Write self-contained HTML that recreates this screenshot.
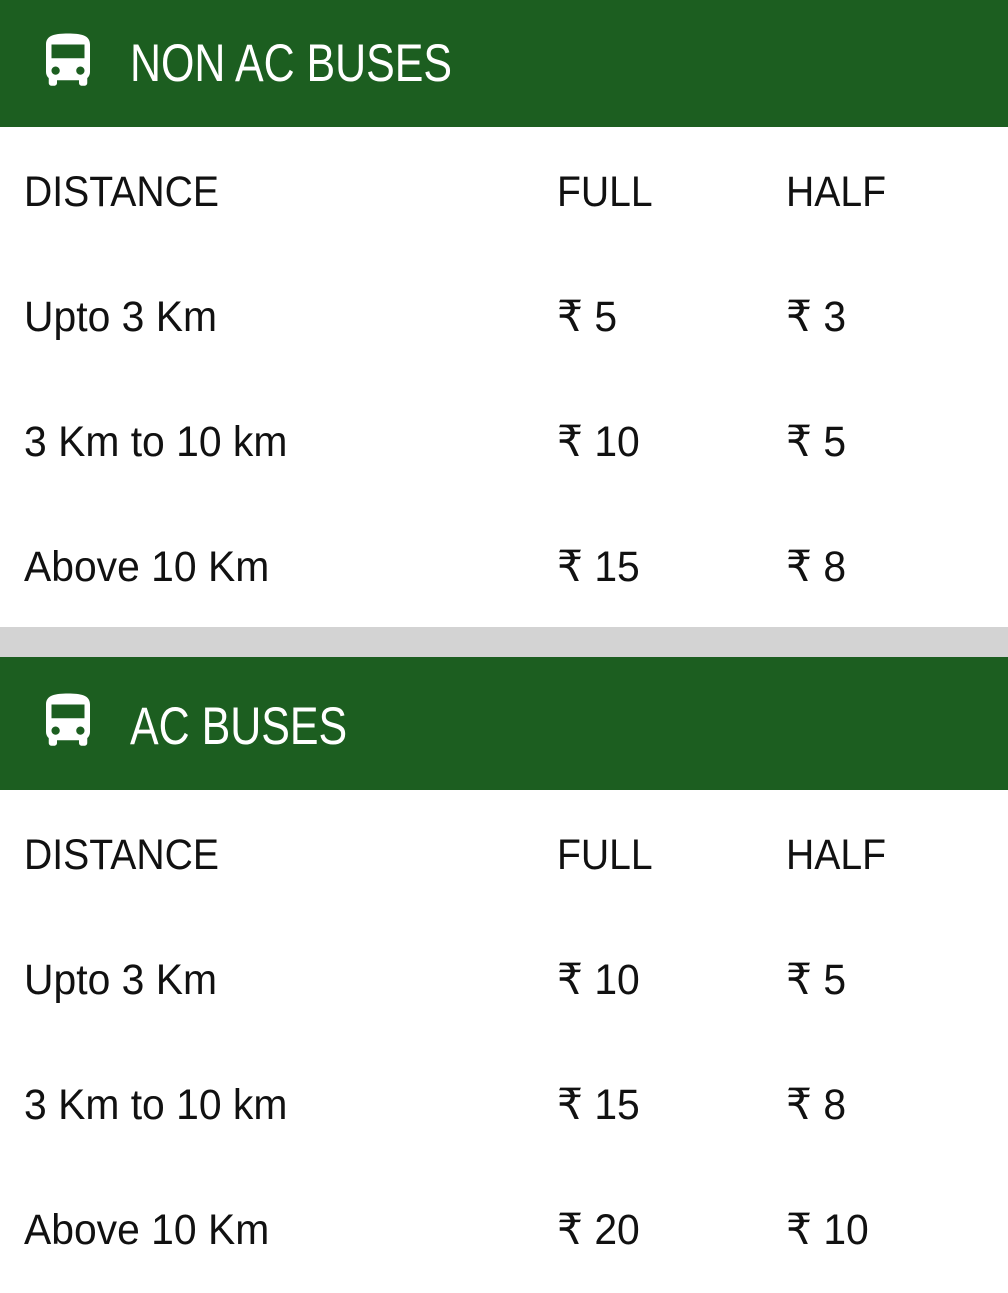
<!DOCTYPE html>
<html><head><meta charset="utf-8"><style>
body{margin:0;width:1008px;height:1281px;background:#fff;font-family:"Liberation Sans",sans-serif;position:relative;overflow:hidden}
.hdr{position:absolute;left:0;width:1008px;height:127px;background:#1c5e20;color:#fff}
.hdr svg{position:absolute;left:35px;top:28px}
.hdr .t{position:absolute;left:130px;top:0;line-height:127px;font-size:53px;transform:scaleX(0.81);transform-origin:left center;white-space:nowrap}
.row{position:absolute;left:0;width:1008px;height:125px;line-height:125px;font-size:43px;color:#111}
.row span{position:absolute;top:0;white-space:nowrap;transform:scaleX(0.95);transform-origin:left center}
.row span.h{transform:scaleX(0.91)}
.c1{left:24px}.c2{left:557px}.c3{left:786px}
.sep{position:absolute;left:0;top:627px;width:1008px;height:30px;background:#d3d3d3}
</style></head><body>
<div class="hdr" style="top:0">
<svg width="66" height="66" viewBox="0 0 24 24"><path fill="#fff" d="M4 16c0 .88.39 1.670 1 2.22V20c0 .55.45 1 1 1h1c.55 0 1-.45 1-1v-1h8v1c0 .55.45 1 1 1h1c.55 0 1-.45 1-1v-1.78c.61-.55 1-1.34 1-2.22V6c0-3.5-3.58-4-8-4s-8 .5-8 4v10zm3.5 1c-.83 0-1.5-.67-1.5-1.5S6.670 14 7.5 14s1.5.67 1.5 1.5S8.33 17 7.5 17zm9 0c-.83 0-1.5-.67-1.5-1.5s.67-1.5 1.5-1.5 1.5.67 1.5 1.5-.67 1.5-1.5 1.5zm1.5-6H6V6h12v5z"/></svg>
<div class="t">NON AC BUSES</div></div>
<div class="row" style="top:130px"><span class="c1 h">DISTANCE</span><span class="c2 h">FULL</span><span class="c3 h">HALF</span></div>
<div class="row" style="top:255px"><span class="c1">Upto 3 Km</span><span class="c2">₹ 5</span><span class="c3">₹ 3</span></div>
<div class="row" style="top:380px"><span class="c1">3 Km to 10 km</span><span class="c2">₹ 10</span><span class="c3">₹ 5</span></div>
<div class="row" style="top:505px"><span class="c1">Above 10 Km</span><span class="c2">₹ 15</span><span class="c3">₹ 8</span></div>
<div class="sep"></div>
<div class="hdr" style="top:657px;height:133px">
<svg width="66" height="66" viewBox="0 0 24 24" style="top:31px"><path fill="#fff" d="M4 16c0 .88.39 1.670 1 2.22V20c0 .55.45 1 1 1h1c.55 0 1-.45 1-1v-1h8v1c0 .55.45 1 1 1h1c.55 0 1-.45 1-1v-1.78c.61-.55 1-1.34 1-2.22V6c0-3.5-3.58-4-8-4s-8 .5-8 4v10zm3.5 1c-.83 0-1.5-.67-1.5-1.5S6.670 14 7.5 14s1.5.67 1.5 1.5S8.33 17 7.5 17zm9 0c-.83 0-1.5-.67-1.5-1.5s.67-1.5 1.5-1.5 1.5.67 1.5 1.5-.67 1.5-1.5 1.5zm1.5-6H6V6h12v5z"/></svg>
<div class="t" style="line-height:140px">AC BUSES</div></div>
<div class="row" style="top:793px"><span class="c1 h">DISTANCE</span><span class="c2 h">FULL</span><span class="c3 h">HALF</span></div>
<div class="row" style="top:918px"><span class="c1">Upto 3 Km</span><span class="c2">₹ 10</span><span class="c3">₹ 5</span></div>
<div class="row" style="top:1043px"><span class="c1">3 Km to 10 km</span><span class="c2">₹ 15</span><span class="c3">₹ 8</span></div>
<div class="row" style="top:1168px"><span class="c1">Above 10 Km</span><span class="c2">₹ 20</span><span class="c3">₹ 10</span></div>
</body></html>
